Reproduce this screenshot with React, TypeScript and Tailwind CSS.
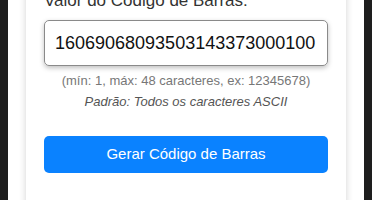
import React from "react";

export default function App() {
  return (
    <div className="h-[200px] w-[372px] overflow-hidden bg-[#1e1e1e] flex" style={{ fontFamily: '"Liberation Sans", Arial, sans-serif' }}>
      <div className="ml-[8px] w-[356px] h-[200px] bg-white">
        <div className="ml-[18px] w-[320px] h-[230px] bg-white shadow-[0_0_7px_rgba(0,0,0,0.18)] px-[18px]">
          <label className="block -mt-[9px] text-[17px] leading-[20px] text-[#333]">Valor do Código de Barras:</label>
          <div className="mt-[9px] h-[46px] rounded-[5px] border border-[#8a8a8a] shadow-[0_2px_5px_rgba(0,0,0,0.25)] flex items-center pl-[10px] text-[18px] text-[#111]">
            16069068093503143373000100
          </div>
          <div className="mt-[7px] text-center text-[13px] leading-[16px] text-[#777]">(mín: 1, máx: 48 caracteres, ex: 12345678)</div>
          <div className="mt-[5px] text-center text-[13px] leading-[16px] italic text-[#555]">Padrão: Todos os caracteres ASCII</div>
          <button className="mt-[26px] w-full h-[37px] rounded-[5px] bg-[#0a82ff] text-white text-[15px]">Gerar Código de Barras</button>
        </div>
      </div>
    </div>
  );
}
